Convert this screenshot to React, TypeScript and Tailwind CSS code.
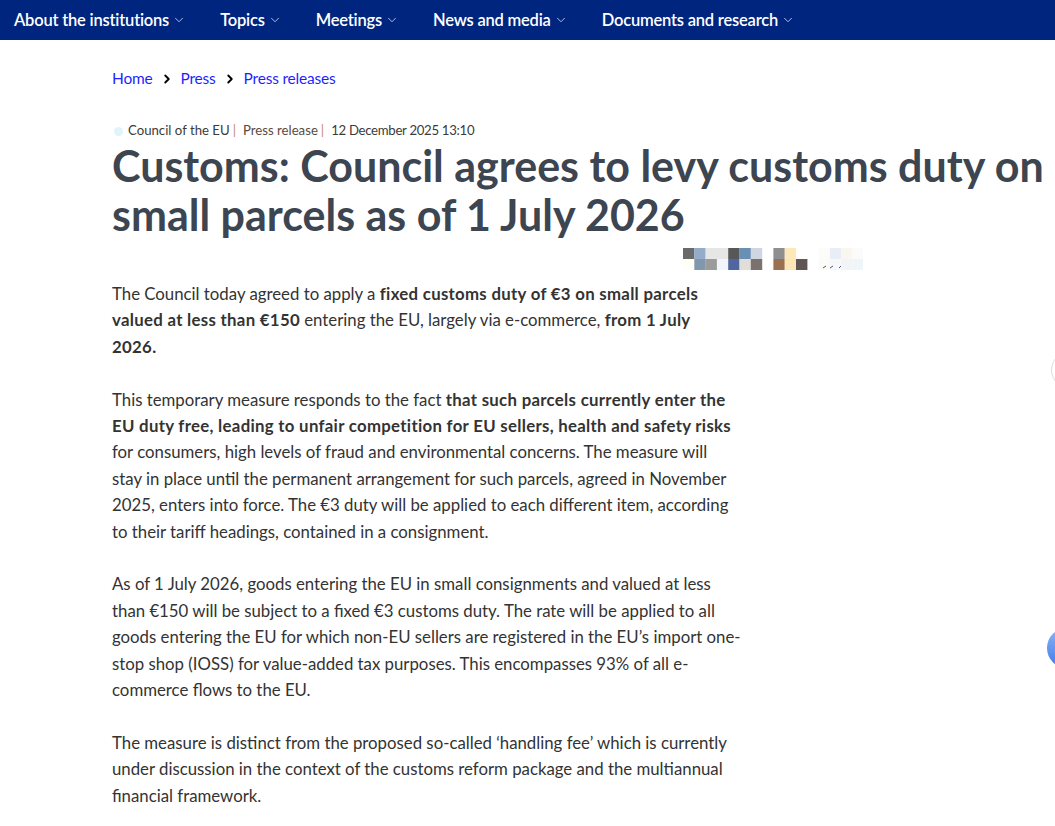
import { ChevronDown, ChevronRight } from "lucide-react";

const navItems = [
  "About the institutions",
  "Topics",
  "Meetings",
  "News and media",
  "Documents and research",
];

// blurred share strip under the title, one row of colours per line
const mosaicTop = ["#6a6a6a", "#93acc9", "#e6e6e6", "#e6e6e6", "#585858", "#6a8fb5", "#cfd6e2", null, "#8f8f8f", "#fde8ba", null, null, "#fcfcfa", "#e9edf5", "#faf6f0", "#fbfbfb"];
const mosaicBottom = ["#fffff6", "#8197ae", "#9b9b9b", "#f2f6fc", "#5066a1", "#e1ddd9", "#7a726c", null, "#9a7050", "#fde6b5", "#5f5555", null, "#fbfbf8", "#f6f8fa", "#f1f5f8", "#eef6fa"];

function Mosaic() {
  return (
    <svg width="180" height="24" viewBox="0 0 180 24" className="block">
      {mosaicTop.map((c, i) =>
        c ? <rect key={"t" + i} x={i * 11.3} y={0} width={11.4} height={11} fill={c} /> : null
      )}
      {mosaicBottom.map((c, i) =>
        c ? <rect key={"b" + i} x={i * 11.3} y={11} width={11.4} height={11} fill={c} /> : null
      )}
      <path d="M140 20 l3 -2 M147 20 l3 -2 M156 20 l2 -2" stroke="#4a5a7a" strokeWidth="1" />
    </svg>
  );
}

export default function App() {
  return (
    <div className="relative min-h-[826px] w-full overflow-hidden bg-white font-['Lato',sans-serif]">
      <nav className="flex h-10 items-center bg-[#00257f] pl-[14px]">
        {navItems.map((item) => (
          <div key={item} className="mr-[34px] flex items-center gap-[3px] text-[16.5px] font-semibold tracking-[-0.2px] text-white">
            <span>{item}</span>
            <ChevronDown className="h-[14px] w-[14px] text-[#c8d0e6]" strokeWidth={1.5} />
          </div>
        ))}
      </nav>

      <main className="pl-[112px]">
        <div className="mt-[27px] flex items-center text-[15.5px] tracking-[-0.2px] text-[#1f1fff]">
          <span>Home</span>
          <ChevronRight className="mx-[7px] h-[14px] w-[14px] text-black" strokeWidth={3.2} />
          <span>Press</span>
          <ChevronRight className="mx-[7px] h-[14px] w-[14px] text-black" strokeWidth={3.2} />
          <span>Press releases</span>
        </div>

        <div className="mt-[31px] flex items-center text-[13.2px] text-[#3b3b3b]">
          <span className="mr-[5px] ml-[2px] inline-block h-[9px] w-[9px] rounded-full bg-[#dff4fb]" />
          <span>Council of the EU</span>
          <span className="mr-[7px] ml-[3px] text-[#c58a6a]">|</span>
          <span className="text-[#5b4a3c]">Press release</span>
          <span className="mr-[7px] ml-[3px] text-[#c58a6a]">|</span>
          <span className="tracking-[-0.3px]">12 December 2025 13:10</span>
        </div>

        <h1 className="mt-0 whitespace-nowrap text-[43px] font-bold leading-[49px] text-[#3c4550]">
          Customs: Council agrees to levy customs duty on
          <br />
          small parcels as of 1 July 2026
        </h1>

        <div className="mt-[9px] ml-[571px]">
          <Mosaic />
        </div>

        <article className="mt-[9px] w-[680px] whitespace-nowrap text-[16.8px] leading-[26.4px] text-[#333333] [&_b]:tracking-[0.3px]">
          <p>
            The Council today agreed to apply a <b>fixed customs duty of €3 on small parcels</b>
            <br />
            <b>valued at less than €150</b> entering the EU, largely via e-commerce, <b>from 1 July</b>
            <br />
            <b>2026.</b>
          </p>

          <p className="mt-[26.4px]">
            This temporary measure responds to the fact <b>that such parcels currently enter the</b>
            <br />
            <b>EU duty free, leading to unfair competition for EU sellers, health and safety risks</b>
            <br />
            for consumers, high levels of fraud and environmental concerns. The measure will
            <br />
            stay in place until the permanent arrangement for such parcels, agreed in November
            <br />
            2025, enters into force. The €3 duty will be applied to each different item, according
            <br />
            to their tariff headings, contained in a consignment.
          </p>

          <p className="mt-[26.4px]">
            As of 1 July 2026, goods entering the EU in small consignments and valued at less
            <br />
            than €150 will be subject to a fixed €3 customs duty. The rate will be applied to all
            <br />
            goods entering the EU for which non-EU sellers are registered in the EU’s import one-
            <br />
            stop shop (IOSS) for value-added tax purposes. This encompasses 93% of all e-
            <br />
            commerce flows to the EU.
          </p>

          <p className="mt-[26.4px]">
            The measure is distinct from the proposed so-called ‘handling fee’ which is currently
            <br />
            under discussion in the context of the customs reform package and the multiannual
            <br />
            financial framework.
          </p>
        </article>
      </main>

      <div className="absolute top-[352px] left-[1051px] h-[36px] w-[36px] rounded-full border border-[#dcdcdc] bg-white" />
      <div className="absolute top-[628px] left-[1047px] h-[40px] w-[40px] rounded-full bg-gradient-to-b from-[#8db3f5] to-[#3d7be8]" />
    </div>
  );
}
